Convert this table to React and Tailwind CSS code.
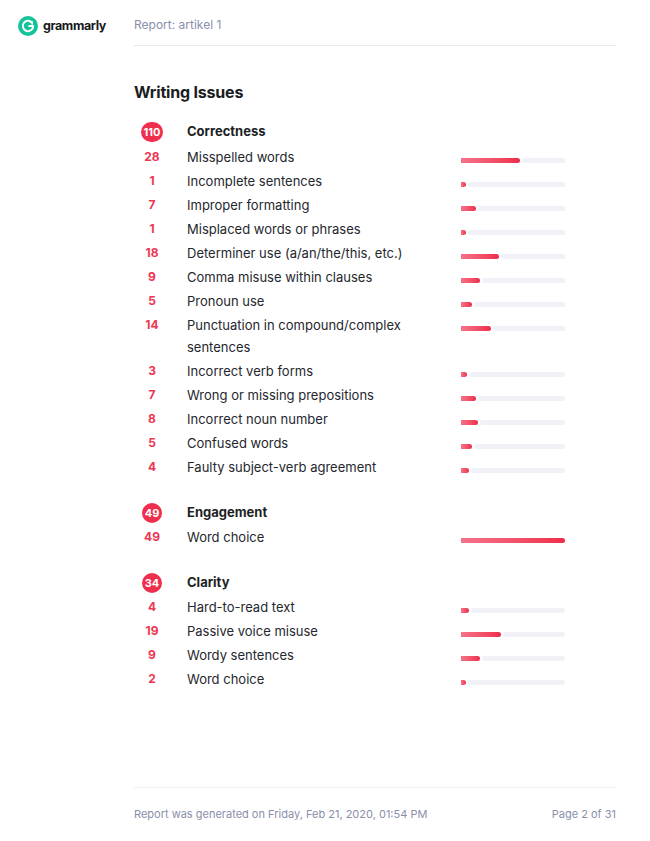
const MAX = 49

const sections = [
  {
    total: 110,
    title: 'Correctness',
    items: [
      [28, 'Misspelled words'],
      [1, 'Incomplete sentences'],
      [7, 'Improper formatting'],
      [1, 'Misplaced words or phrases'],
      [18, 'Determiner use (a/an/the/this, etc.)'],
      [9, 'Comma misuse within clauses'],
      [5, 'Pronoun use'],
      [14, 'Punctuation in compound/complex sentences'],
      [3, 'Incorrect verb forms'],
      [7, 'Wrong or missing prepositions'],
      [8, 'Incorrect noun number'],
      [5, 'Confused words'],
      [4, 'Faulty subject-verb agreement'],
    ],
  },
  { total: 49, title: 'Engagement', items: [[49, 'Word choice']] },
  {
    total: 34,
    title: 'Clarity',
    items: [
      [4, 'Hard-to-read text'],
      [19, 'Passive voice misuse'],
      [9, 'Wordy sentences'],
      [2, 'Word choice'],
    ],
  },
]

function Logo() {
  return (
    <div className="flex items-center gap-[5px]">
      <svg width="20" height="20" viewBox="0 0 20 20">
        <circle cx="10" cy="10" r="10" fill="#15c39a" />
        <path d="M13.7 6.3 A5.2 5.2 0 1 0 15.2 10 H11.2" fill="none" stroke="#fff" strokeWidth="1.9" strokeLinecap="round" strokeLinejoin="round" />
        <path d="M11.9 5.9 H14.1 V8.1" fill="none" stroke="#fff" strokeWidth="1.6" strokeLinecap="round" strokeLinejoin="round" />
      </svg>
      <span className="text-[12.5px] font-bold tracking-[-0.4px] text-[#16181d]">grammarly</span>
    </div>
  )
}

function Bar({ n }) {
  const w = Math.max(5, (n / MAX) * 104)
  return (
    <div className="mt-[12px] flex h-[5px] w-[104px]">
      <div
        className="h-full rounded-r-full bg-gradient-to-r from-[#f4718a] to-[#ee2b4b]"
        style={{ width: w }}
      />
      {n < MAX && <div className="ml-[2px] h-full flex-1 rounded-full bg-[#f1f1f8]" />}
    </div>
  )
}

function Section({ s, first }) {
  return (
    <div className={first ? 'flex flex-col gap-[2px]' : 'mt-[22px] flex flex-col gap-[2px]'}>
      <div className={first ? 'flex h-[24px] items-center' : 'flex h-[24px] items-center pt-[2px]'}>
        <div className="flex w-[36px] justify-center">
          <span className="flex h-[20px] min-w-[20px] items-center justify-center rounded-full bg-[#ee2f4d] px-[3px] text-[11px] font-bold text-white">
            {s.total}
          </span>
        </div>
        <div className="ml-[17px] text-[13px] font-bold text-[#1d1f24]">{s.title}</div>
      </div>
      {s.items.map(([n, label], i) => (
        <div key={i} className="flex items-start leading-[22px]">
          <div className="w-[36px] text-center text-[12px] font-bold text-[#ee3653]">{n}</div>
          <div className="ml-[17px] w-[250px] text-[13px] text-[#25272d]">{label}</div>
          <div className="ml-[24px]">
            <Bar n={n} />
          </div>
        </div>
      ))}
    </div>
  )
}

export default function App() {
  return (
    <div className="flex min-h-[841px] w-[650px] flex-col bg-white font-['Inter',sans-serif]">
      <header className="flex h-[46px]">
        <div className="flex w-[134px] items-center pl-[18px] pt-[6px]">
          <Logo />
        </div>
        <div className="mr-[34px] flex flex-1 items-center border-b border-[#e7e8f1] pt-[4px] text-[12px] text-[#8a8fa9]">
          Report: artikel 1
        </div>
      </header>

      <main className="ml-[134px] mr-[34px]">
        <h1 className="mt-[34px] mb-[16px] text-[16px] leading-[24px] font-bold tracking-[-0.2px] text-[#1b1d22]">Writing Issues</h1>
        {sections.map((s, i) => (
          <Section key={s.title} s={s} first={i === 0} />
        ))}
      </main>

      <footer className="mt-auto ml-[134px] mr-[34px] flex h-[54px] justify-between border-t border-[#eeeff5] pt-[18px] text-[11px] leading-[16px] text-[#8a8fa9]">
        <span>Report was generated on Friday, Feb 21, 2020, 01:54 PM</span>
        <span>Page 2 of 31</span>
      </footer>
    </div>
  )
}
